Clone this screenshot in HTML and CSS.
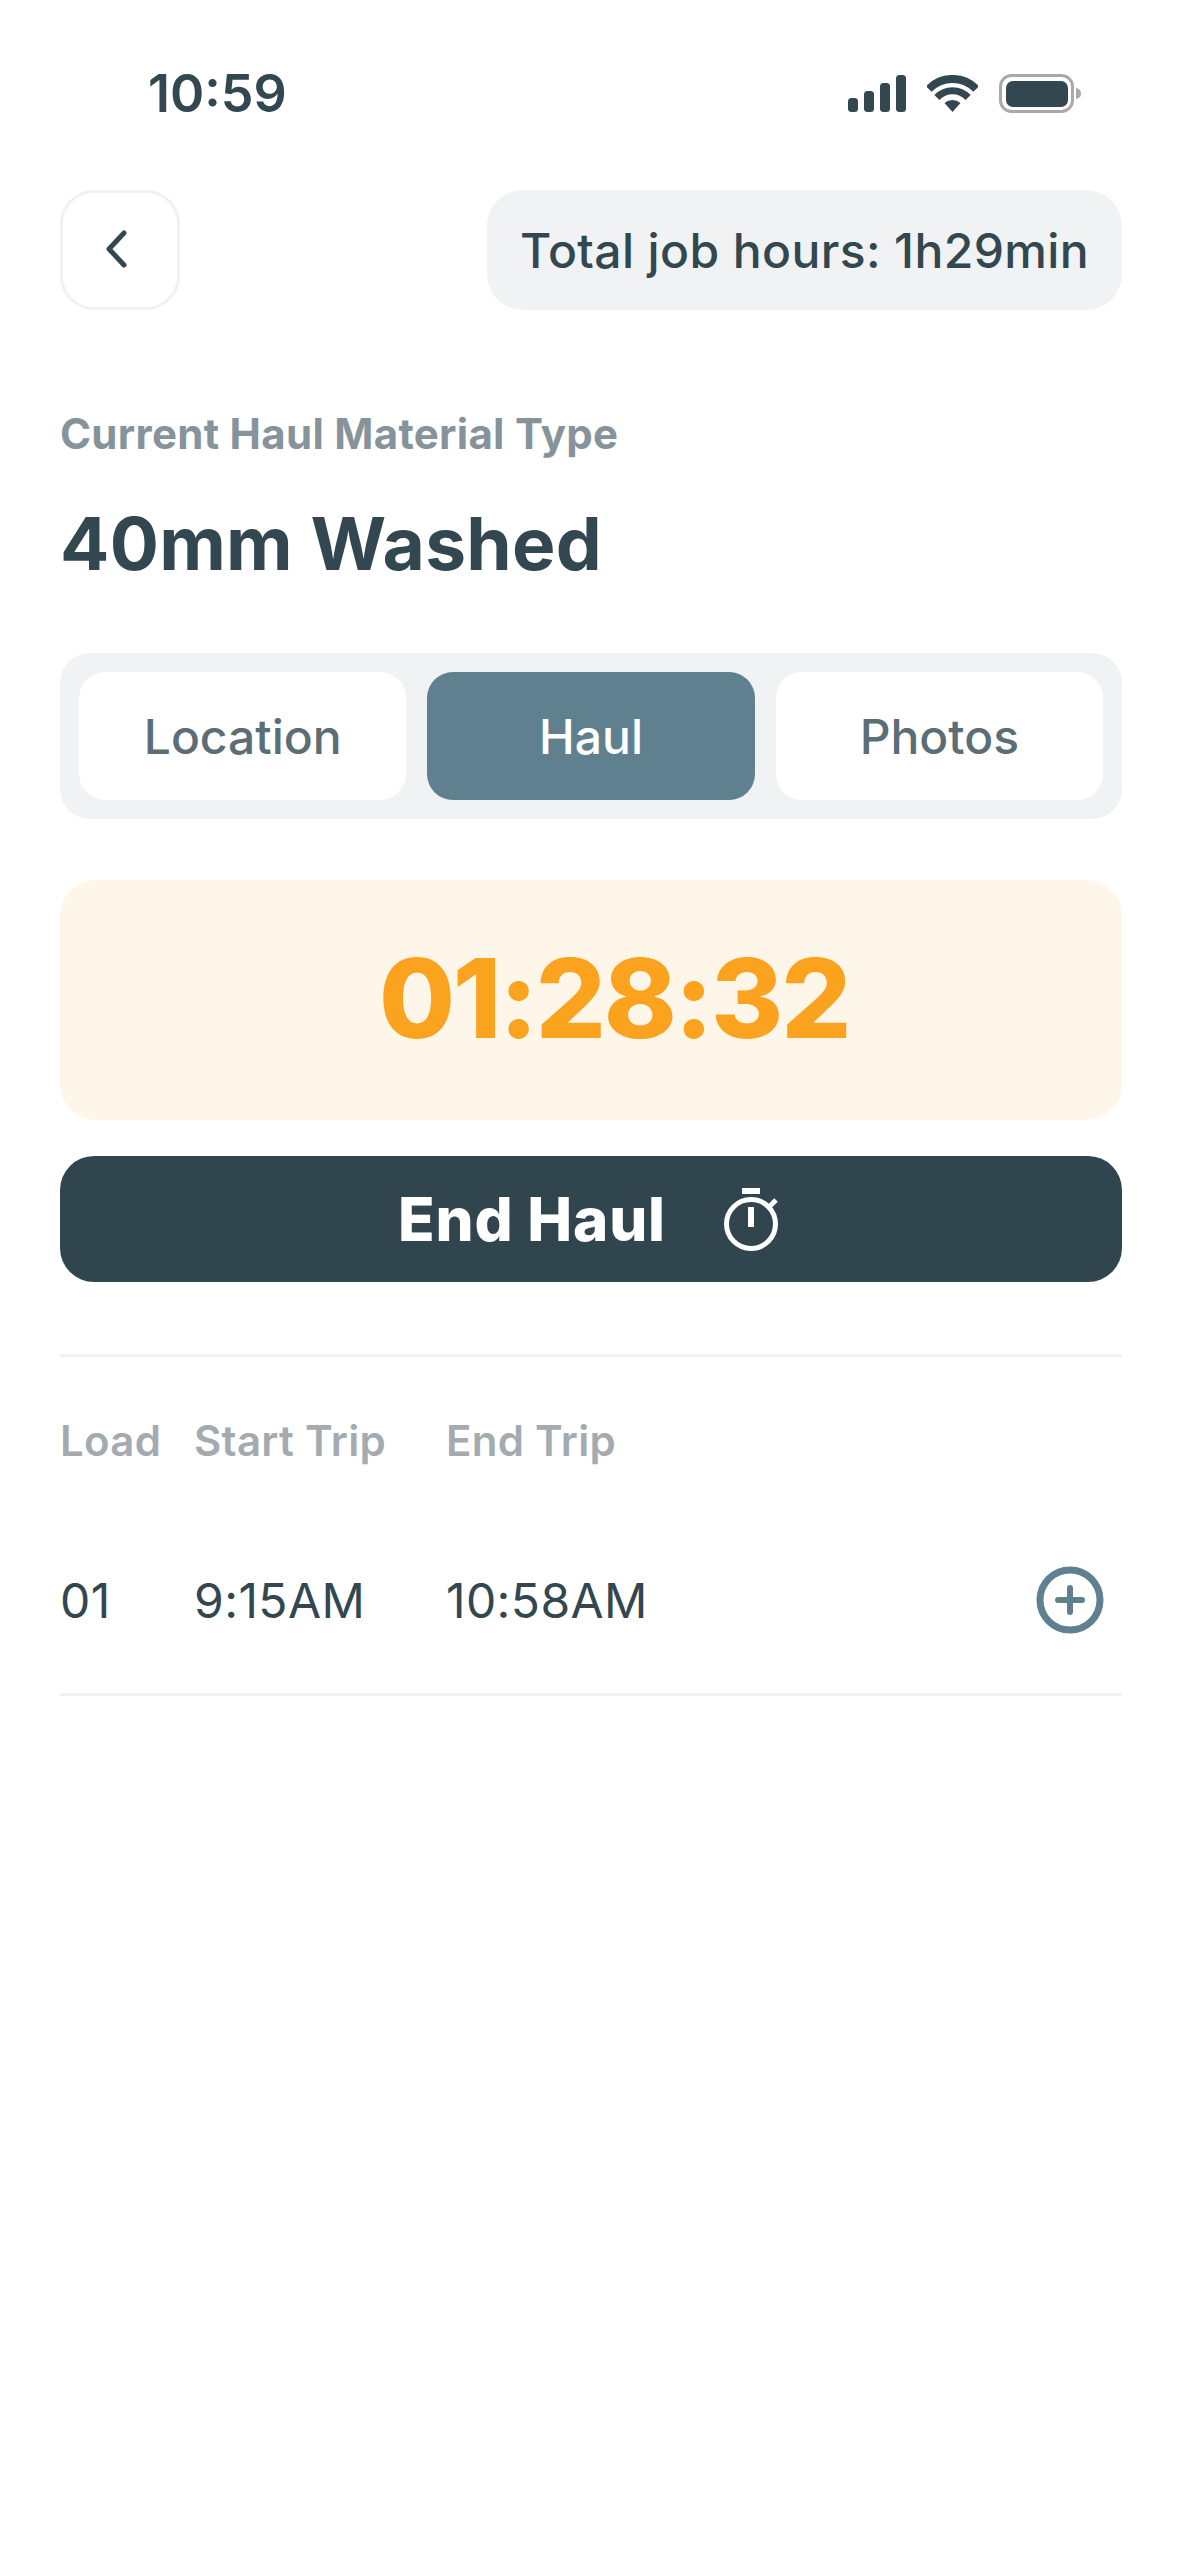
FILE: index.html
```html
<!DOCTYPE html>
<html lang="en">
<head>
  <meta charset="UTF-8" />
  <title>Haul</title>
  <link rel="stylesheet" href="styles.css">
</head>
<body>
  <div class="status-bar">
    <span class="clock">10:59</span>
    <div class="status-icons">
      <svg width="58" height="37" viewBox="0 0 58 37">
        <rect x="0" y="23" width="10" height="14" rx="3.500" />
        <rect x="16" y="16" width="10" height="21" rx="3.500" />
        <rect x="32" y="8" width="10" height="29" rx="3.500" />
        <rect x="48" y="0" width="10" height="37" rx="3.500" />
      </svg>
      <svg width="51" height="37" viewBox="0 0 51 37">
        <path d="M25.500 37 L17.500 28.100 A12 12 0 0 1 33.500 28.100 Z" />
        <path d="M9.900 22.500 A21.300 21.300 0 0 1 41.100 22.500" fill="none" stroke="#32474f" stroke-width="7" />
        <path d="M1.800 14 A33 33 0 0 1 49.200 14" fill="none" stroke="#32474f" stroke-width="8" />
      </svg>
      <svg width="82" height="39" viewBox="0 0 82 39">
        <rect x="1.500" y="1.500" width="72" height="36" rx="11" fill="none" stroke="#a9a9a9" stroke-width="3" />
        <rect x="7" y="7" width="62" height="26" rx="7" />
        <path d="M77 14 Q82 15 82 19.500 Q82 24 77 25 Z" fill="#a9a9a9" />
      </svg>
    </div>
  </div>

  <div class="top-row">
    <button class="back-btn">
      <svg width="24" height="38" viewBox="0 0 24 38">
        <path d="M20 3 L5 19 L20 35" fill="none" stroke="#32474f" stroke-width="5" stroke-linecap="round" stroke-linejoin="round" />
      </svg>
    </button>
    <div class="hours-pill">Total job hours: 1h29min</div>
  </div>

  <p class="material-label">Current Haul Material Type</p>
  <h1 class="material-name">40mm Washed</h1>

  <div class="tabs">
    <div class="tab">Location</div>
    <div class="tab active">Haul</div>
    <div class="tab">Photos</div>
  </div>

  <div class="timer">01:28:32</div>

  <button class="end-btn">
    <span>End Haul</span>
    <svg width="54" height="63" viewBox="0 0 54 63" fill="none" stroke="#fff">
      <circle cx="27" cy="36" r="24.500" stroke-width="5" />
      <path d="M18 3 H36" stroke-width="6" />
      <path d="M27 19 V39" stroke-width="6" />
      <path d="M45 19 L52 12" stroke-width="5" />
    </svg>
  </button>

  <div class="trips">
    <div class="trip-row trip-head">
      <span>Load</span>
      <span>Start Trip</span>
      <span>End Trip</span>
    </div>
    <div class="trip-row trip-item">
      <span>01</span>
      <span>9:15AM</span>
      <span>10:58AM</span>
      <svg class="add-icon" width="68" height="68" viewBox="0 0 68 68" fill="none" stroke="#5f818f" stroke-linecap="round">
        <circle cx="34" cy="34" r="30" stroke-width="7" />
        <path d="M22 34 H46 M34 22 V46" stroke-width="6" />
      </svg>
    </div>
  </div>
</body>
</html>
```

FILE: styles.css
```css
* {
  box-sizing: border-box;
}

body {
  margin: 0;
  padding: 0 57px 0 60px;
  background-color: #fff;
  color: #32474f;
  font-family: Inter, sans-serif;
}

.status-bar {
  display: flex;
  justify-content: space-between;
  align-items: center;
  height: 190px;
  padding: 0 41px 4px 88px;
}

.clock {
  font-size: 52px;
  font-weight: 600;
}

.status-icons {
  display: flex;
  align-items: center;
  gap: 21px;
  fill: #32474f;
}

.top-row {
  display: flex;
  justify-content: space-between;
  height: 120px;
}

.back-btn {
  width: 120px;
  border: 3px solid #f0f1f2;
  border-radius: 34px;
  background-color: #fff;
  padding: 0 8px 0 0;
}

.hours-pill {
  display: flex;
  align-items: center;
  justify-content: center;
  width: 635px;
  background-color: #f0f2f4;
  border-radius: 36px;
  font-size: 48px;
  font-weight: 500;
  letter-spacing: 0.4px;
}

.material-label {
  margin: 99px 0 0;
  height: 50px;
  line-height: 50px;
  font-size: 42px;
  font-weight: 700;
  letter-spacing: 0.3px;
  color: #87939b;
}

.material-name {
  margin: 42px 0 0;
  height: 86px;
  line-height: 86px;
  font-size: 73px;
  font-weight: 700;
  letter-spacing: 0.3px;
}

.tabs {
  display: flex;
  gap: 21px;
  margin-top: 66px;
  padding: 19px;
  height: 166px;
  background-color: #f0f2f4;
  border-radius: 30px;
}

.tab {
  flex: 1;
  display: flex;
  align-items: center;
  justify-content: center;
  background-color: #fff;
  border-radius: 26px;
  font-size: 48px;
  font-weight: 500;
  color: #5b6d75;
}

.tab.active {
  background-color: #5f818f;
  color: #fff;
}

.timer {
  margin-top: 61px;
  height: 240px;
  line-height: 236px;
  padding-left: 46px;
  text-align: center;
  background-color: #fef6e9;
  border-radius: 36px;
  font-size: 110px;
  font-weight: 800;
  letter-spacing: -2.2px;
  color: #fba31f;
}

.end-btn {
  display: flex;
  align-items: center;
  justify-content: center;
  gap: 58px;
  width: 100%;
  height: 126px;
  margin-top: 36px;
  border: none;
  border-radius: 34px;
  background-color: #30454e;
  color: #fff;
  font-family: Inter, sans-serif;
  font-size: 60px;
  font-weight: 800;
  letter-spacing: 0.8px;
  padding: 0 6px 0 0;
}

.trips {
  margin-top: 72px;
  border-top: 3px solid #f1f2f3;
  border-bottom: 3px solid #f1f2f3;
}

.trip-row {
  display: grid;
  grid-template-columns: 134px 252px 1fr auto;
  align-items: center;
}

.trip-head {
  height: 70px;
  margin-top: 48px;
  font-size: 42px;
  font-weight: 600;
  letter-spacing: 0.3px;
  color: #a4abb0;
}

.trip-item {
  height: 218px;
  padding: 32px 18px 0 0;
  font-size: 48px;
  font-weight: 400;
  letter-spacing: 0.4px;
}

.add-icon {
  display: block;
}
```
